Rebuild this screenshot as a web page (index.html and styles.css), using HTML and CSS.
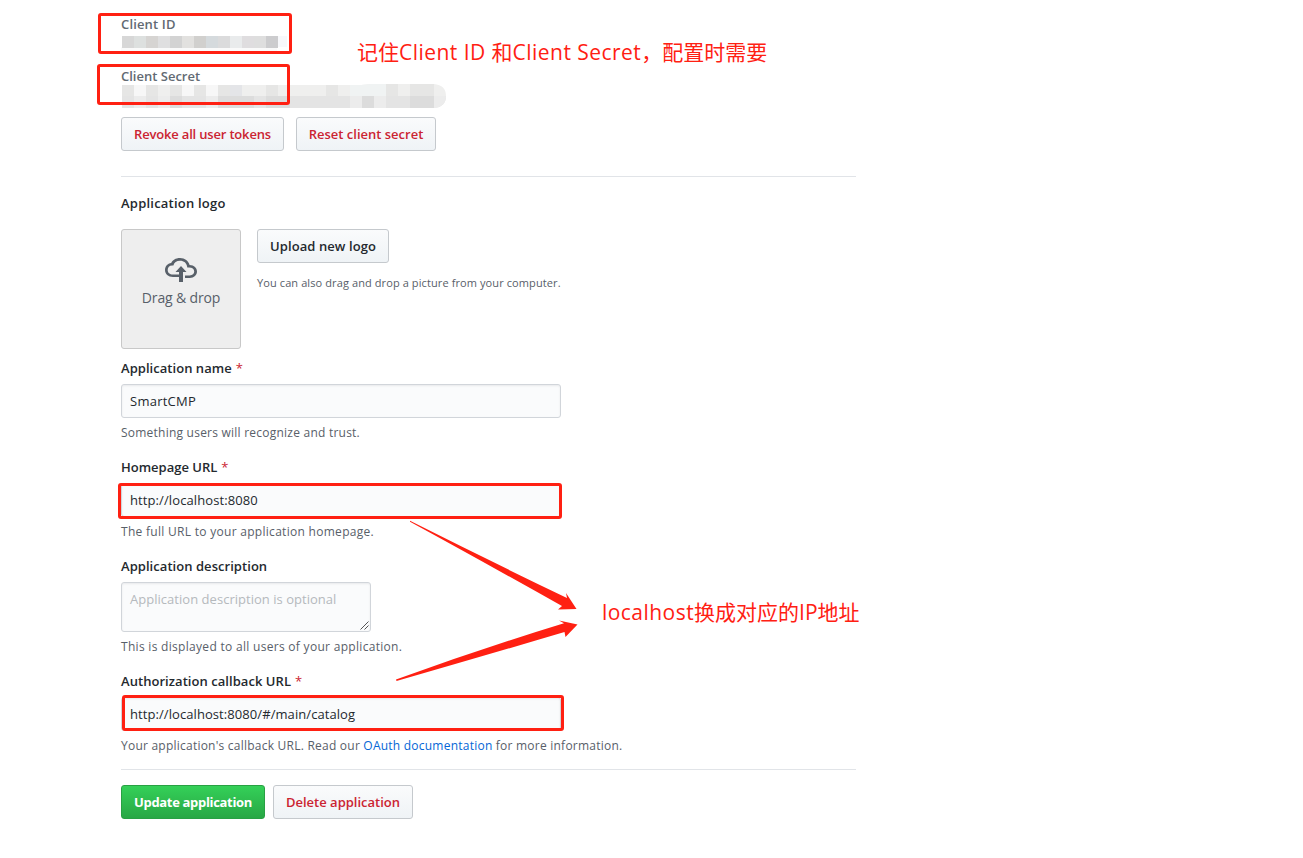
FILE: index.html
```
<!DOCTYPE html>
<html lang="en">
<head>
<meta charset="utf-8">
<title>OAuth application settings</title>
<link rel="stylesheet" href="styles.css">
</head>
<body>
<main class="settings">
  <section class="credentials">
    <div class="credential"><span class="t-id">Client ID</span></div>
    <svg class="mask mask-id" width="170" height="22" viewBox="0 0 170 22" shape-rendering="crispEdges">
      <path fill="#f7f8fb" d="M156 1h10v11h-10z"/><path fill="#fafafa" d="M0 12h156v6H0z"/>
      <path fill="#d7d7d7" d="M1 1h12v12H1z"/><path fill="#dde0df" d="M13 1h12v12H13z"/><path fill="#d6d4d2" d="M25 1h12v12H25z"/><path fill="#dfdfe0" d="M37 1h12v12H37z"/><path fill="#d3d3d3" d="M49 1h12v12H49z"/><path fill="#e2e1df" d="M61 1h12v12H61z"/><path fill="#d1d0ce" d="M73 1h12v12H73z"/><path fill="#d5dadd" d="M85 1h12v12H85z"/><path fill="#dbdbdc" d="M97 1h12v12H97z"/><path fill="#e9ebec" d="M109 1h12v12h-12z"/><path fill="#dfdddf" d="M121 1h12v12h-12z"/><path fill="#dedede" d="M133 1h12v12h-12z"/><path fill="#ccccce" d="M145 1h12v12h-12z"/>
    </svg>
    <div class="credential"><span class="t-secret">Client Secret</span></div>
    <svg class="mask mask-secret" width="325" height="24" viewBox="0 0 325 24">
      <clipPath id="blob"><path d="M1 1h239l10-1h63q12 1 12 12t-12 12H1z"/></clipPath>
      <g clip-path="url(#blob)" shape-rendering="crispEdges">
        <path fill="#efefee" d="M0 0h325v12H0z"/><path fill="#e4e4e4" d="M0 12h325v12H0z"/>
        <path fill="#e6e6e5" d="M0 0h13v12H0zM25 0h12v12H25zM49 0h12v12H49zM73 0h12v12H73zM97 0h12v12H97zM145 0h12v12h-12zM205 0h12v12h-12zM265 0h12v12h-12zM289 0h24v12h-24z"/>
        <path fill="#f7f7f7" d="M13 0h12v12H13zM61 0h12v12H61zM85 0h12v12H85z"/>
        <path fill="#e4e5e8" d="M109 0h12v12h-12z"/><path fill="#f0f3f3" d="M229 0h36v12h-36z"/>
        <path fill="#dcdcdc" d="M49 12h12v12H49zM97 12h36v12H97zM145 12h24v12h-24zM241 12h12v12h-12zM289 12h24v12h-24z"/>
        <path fill="#ececec" d="M13 12h12v12H13zM37 12h12v12H37zM85 12h12v12H85zM229 12h12v12h-12zM253 12h12v12h-12zM313 12h12v12h-12z"/>
      </g>
    </svg>
    <div class="actions wide"><button class="btn danger b-revoke"><span class="t-revoke">Revoke all user tokens</span></button><button class="btn danger b-reset"><span class="t-reset">Reset client secret</span></button></div>
  </section>
  <section class="logo-section">
    <div class="label"><span class="t-logo">Application logo</span></div>
    <div class="logo-row">
      <div class="dropzone">
        <svg width="32" height="26" viewBox="0 0 32 26" fill="#586069"><path d="M14 18H8C3.200 18 0 15 0 11c0-3.600 2.600-6.500 6.200-7C7.400 1.300 10.600-1 15-1c5 0 8.400 3.200 9.600 7C29.200 6.200 32 9 32 12.500 32 16 29 19 24.800 19H20v-2.600h4.800c2.700 0 4.400-1.700 4.400-3.900 0-2.600-2.200-4-5.500-3.900h-1.400l-.2-1.200C21.600 4 19 1.700 15 1.700c-3.500 0-6 1.900-6.600 4.700H7.200C4.300 6.400 2.700 8.500 2.700 11c0 2.700 2 4.600 5.300 4.600h6zM10.500 13 16 7l5.500 6H18v10h-4V13z" transform="translate(0 2)"/></svg>
        <span class="drag"><span class="t-drag">Drag &amp; drop</span></span>
      </div>
      <div class="upload"><button class="btn b-upload"><span class="t-upload">Upload new logo</span></button><p class="small"><span class="t-small">You can also drag and drop a picture from your computer.</span></p></div>
    </div>
  </section>
  <div class="field"><label class="label"><span class="t-name">Application name</span><i>*</i></label><div class="input"><span class="t-smart">SmartCMP</span></div><p class="note"><span class="t-n1">Something users will recognize and trust.</span></p></div>
  <div class="field"><label class="label"><span class="t-home">Homepage URL</span><i>*</i></label><div class="input"><span class="t-u1">http://localhost:8080</span></div><p class="note"><span class="t-n2">The full URL to your application homepage.</span></p></div>
  <div class="field"><label class="label"><span class="t-desc">Application description</span></label><div class="input area"><span class="t-ph">Application description is optional</span><svg class="grip" width="9" height="9" viewBox="0 0 9 9"><path d="M.5 8.500l8-8M4.500 8.500l4-4" stroke="#555" fill="none"/></svg></div><p class="note"><span class="t-n3">This is displayed to all users of your application.</span></p></div>
  <div class="field"><label class="label"><span class="t-auth">Authorization callback URL</span><i>*</i></label><div class="input"><span class="t-u2">http://localhost:8080/#/main/catalog</span></div><p class="note"><span class="t-n4">Your application's callback URL. Read our <a>OAuth documentation</a> for more information.</span></p></div>
  <div class="actions footer"><button class="btn primary b-update"><span class="t-update">Update application</span></button><button class="btn danger b-delete"><span class="t-delete">Delete application</span></button></div>
</main>
<svg class="marks" width="1303" height="858" viewBox="0 0 1303 858">
  <g fill="none" stroke="#ff2012" stroke-width="3"><rect x="99.500" y="14.500" width="191" height="38" rx="1.500"/><rect x="98.500" y="65.500" width="190" height="38" rx="1.500"/><rect x="119.500" y="484.500" width="441" height="33" rx="1.500"/><rect x="123.500" y="696.500" width="439" height="33" rx="1.500"/></g>
  <g fill="#ff2012"><path d="M410 520.800Q490 561 567 598l-1-5L576.500 609 558 609.500l4-3.500Q480 560 410 521.800z"/><path d="M396 679.500Q480 649 564 623.300L559 620.500 577.500 624.500 565.500 637l-1-5Q480 657 396.500 681z"/></g>
</svg>
<div class="callout first">记住<span class="latin">Client ID </span>和<span class="latin">Client Secret</span>，配置时需要</div>
<div class="callout second"><span class="latin">localhost</span>换成对应的IP地址</div>
</body>
</html>
```
FILE: styles.css
```
* { box-sizing: border-box; }
body { margin: 0; width: 1303px; height: 858px; overflow: hidden; background: #fff; color: #24292e; font: 13px/21px "Open Sans", "Noto Sans", sans-serif; position: relative; }
p { margin: 0; }
span { white-space: nowrap; }
.settings { width: 735px; margin-left: 121px; padding-top: 13px; }
.credentials { height: 164px; border-bottom: 1px solid #e1e4e8; }
.credential { height: 21px; color: #626a73; font-weight: 600; line-height: 22px; }
.mask { display: block; }
.mask-id { margin: 1px 0 8px; height: 22px; }
.mask-secret { margin-top: -2px; height: 24px; }
.actions { display: flex; }
.wide { gap: 12px; margin-top: 9px; }
.btn { height: 34px; padding: 0; text-align: center; font: 600 13px/20px "Open Sans", sans-serif; color: #24292e; border: 1px solid #c5c9cd; border-radius: 3px; background: linear-gradient(#fafbfc, #eff3f6); }
.danger { color: #cb2431; }
.primary { color: #fff; border-color: #28a043; background: linear-gradient(#34d058, #28a745); }
.b-revoke { width: 163px; }
.b-reset { width: 140px; }
.b-upload { width: 132px; display: block; }
.b-update { width: 144px; font-weight: 700; }
.b-delete { width: 140px; }
.label { display: block; height: 21px; font-weight: 600; }
.label i { color: #cb2431; font-style: normal; font-weight: 400; margin-left: 4px; }
.logo-section { padding-top: 16px; height: 181px; }
.logo-row { display: flex; gap: 16px; margin-top: 15px; }
.dropzone { width: 120px; height: 120px; border: 1px solid #c8c8c8; border-radius: 3px; background: #eee; display: flex; flex-direction: column; align-items: center; padding-top: 27px; }
.drag { color: #586069; font-size: 14px; margin-top: 4px; }
.small { font-size: 11px; color: #586069; margin-top: 9px; }
.field { padding-bottom: 14px; }
.input { width: 440px; height: 34px; border: 1px solid #d1d5da; border-radius: 3px; background: #fafbfc; box-shadow: inset 0 1px 2px rgba(27,31,35,.075); margin-top: 5px; padding: 6px 8px; line-height: 20px; position: relative; }
.area { width: 250px; height: 50px; color: #b5b9bd; }
.grip { position: absolute; right: 1px; bottom: 1px; }
.note { margin-top: 5px; height: 20px; line-height: 20px; font-size: 12px; color: #586069; }
.note a { color: #0366d6; }
.footer { gap: 8px; border-top: 1px solid #e1e4e8; padding-top: 15px; margin-top: -1px; }
.t-id { letter-spacing: .15px; }
.t-revoke { letter-spacing: -.18px; }
.t-logo { letter-spacing: .22px; }
.t-upload { letter-spacing: .08px; }
.t-drag { letter-spacing: -.15px; }
.t-small { letter-spacing: .1px; }
.t-name { letter-spacing: .04px; }
.t-smart { letter-spacing: .25px; }
.t-n1 { letter-spacing: .23px; }
.t-n2 { letter-spacing: .29px; }
.t-n3 { letter-spacing: .3px; }
.t-n4 { letter-spacing: .23px; }
.t-u1 { letter-spacing: .1px; }
.t-u2 { letter-spacing: .075px; }
.t-ph { letter-spacing: .03px; }
.t-desc, .t-auth { letter-spacing: .05px; }
.t-update { letter-spacing: -.32px; }
.marks { position: absolute; left: 0; top: 0; }
.callout { position: absolute; white-space: nowrap; color: #ff2012; font: 21px/28px "Open Sans", "Noto Sans CJK SC", sans-serif; font-weight: 400; }
.latin { letter-spacing: .46px; white-space: pre; }
.first { left: 357px; top: 38px; }
.second { left: 602px; top: 598px; }
```
